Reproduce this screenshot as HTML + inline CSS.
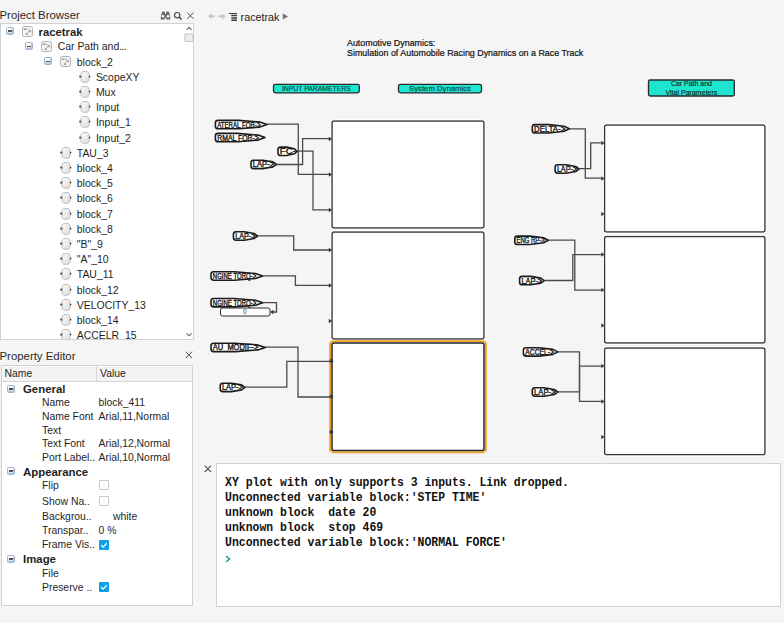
<!DOCTYPE html>
<html><head><meta charset="utf-8"><style>
html,body{margin:0;padding:0;}
body{width:784px;height:623px;overflow:hidden;position:relative;background:#f5f5f5;font-family:"Liberation Sans", sans-serif;color:#1e1e1e;}
.a{position:absolute;}
.hdr{position:absolute;font-size:11.4px;color:#2b2b2b;white-space:nowrap;line-height:14px;}
.box{position:absolute;background:#fff;border:1px solid #d2d2d2;box-sizing:border-box;overflow:hidden;}
.tt{position:absolute;font-size:10.45px;line-height:14px;white-space:nowrap;color:#1f1f1f;}
.b{font-weight:bold;}
.tt.b{font-size:11.3px;}
.pt{position:absolute;font-size:10.4px;line-height:14px;white-space:nowrap;color:#1f1f1f;}
.pt.b{font-size:11.4px;}
.ic{position:absolute;}
.xb{position:absolute;width:6px;height:6px;border:1px solid #9fb3cf;background:linear-gradient(#ffffff 30%,#c2d1e6);border-radius:1.5px;box-shadow:inset -1px -1px 0 #b5c6de;}
.xb:after{content:"";position:absolute;left:1px;top:2.4px;width:4px;height:1.3px;background:#5a5048;}
.cb{position:absolute;width:8px;height:8px;border:1px solid #c6c6c6;background:#fff;border-radius:1px;}
.cl{position:absolute;left:7.5px;font-family:"Liberation Mono",monospace;font-weight:bold;font-size:12.4px;line-height:14px;white-space:nowrap;color:#111;transform:scaleX(0.925);transform-origin:0 0;}
</style></head><body>
<svg width="0" height="0" style="position:absolute"><defs><linearGradient id="lg" x1="0" y1="0" x2="1" y2="1"><stop offset="0" stop-color="#fdfdfd"/><stop offset="1" stop-color="#dcdcdc"/></linearGradient></defs></svg>
<div class="hdr" style="left:-0.5px;top:7.5px">Project Browser</div>
<svg class="ic" style="left:160px;top:11px" width="36" height="10" viewBox="0 0 36 10">
 <path d="M1.9 1.2 Q2.2 0.6 3 0.6 L4 0.6 Q4.7 0.6 4.9 1.4 L5.1 3 L5.9 3 L6.1 1.4 Q6.3 0.6 7 0.6 L8 0.6 Q8.8 0.6 9.1 1.2 L10.2 5.5 L10.2 8.6 L6.4 8.6 L6.1 6.8 L4.9 6.8 L4.6 8.6 L0.8 8.6 L0.8 5.5Z" fill="#6a6a6a"/>
 <circle cx="3" cy="5.2" r="1.3" fill="#fff"/><circle cx="8" cy="5.2" r="1.3" fill="#fff"/>
 <circle cx="17.2" cy="4.2" r="2.7" fill="none" stroke="#505050" stroke-width="1.2"/><path d="M19.1 6.2 L21.6 8.5" stroke="#404040" stroke-width="1.6"/>
 <path d="M27.3 1.6 L33.5 7.9 M33.5 1.6 L27.3 7.9" stroke="#4a4a4a" stroke-width="1"/>
</svg>
<div class="box" style="left:0px;top:23px;width:194px;height:317px;">
<div class="xb" style="left:5.0px;top:3.0px"></div><svg class="ic" style="left:21.0px;top:2.0px" width="11" height="11" viewBox="0 0 11 11"><rect x="0.5" y="0.5" width="10" height="10" rx="1.8" fill="#f3f3f3" stroke="#b4b4b4"/><path d="M3 3.2h3.5l1.5 1.5M4.5 8l2.5-3" stroke="#a8a8a8" fill="none" stroke-width="0.8"/><rect x="1.8" y="2.3" width="2.4" height="1.8" rx="0.8" fill="#a0a0a0"/><rect x="6.6" y="4.2" width="2.6" height="2" rx="0.5" fill="#ababab"/><rect x="3.6" y="7.2" width="2.4" height="1.9" rx="0.5" fill="#a6a6a6"/></svg><div class="tt b" style="left:37.6px;top:1.1px">racetrak</div><div class="xb" style="left:24.1px;top:18.2px"></div><svg class="ic" style="left:40.1px;top:17.200000000000003px" width="11" height="11" viewBox="0 0 11 11"><rect x="0.5" y="0.5" width="10" height="10" rx="1.8" fill="#f3f3f3" stroke="#b4b4b4"/><path d="M3 3.2h3.5l1.5 1.5M4.5 8l2.5-3" stroke="#a8a8a8" fill="none" stroke-width="0.8"/><rect x="1.8" y="2.3" width="2.4" height="1.8" rx="0.8" fill="#a0a0a0"/><rect x="6.6" y="4.2" width="2.6" height="2" rx="0.5" fill="#ababab"/><rect x="3.6" y="7.2" width="2.4" height="1.9" rx="0.5" fill="#a6a6a6"/></svg><div class="tt" style="left:56.7px;top:16.3px">Car Path and<span style="letter-spacing:-0.6px">...</span></div><div class="xb" style="left:43.2px;top:33.4px"></div><svg class="ic" style="left:59.2px;top:32.4px" width="11" height="11" viewBox="0 0 11 11"><rect x="0.5" y="0.5" width="10" height="10" rx="1.8" fill="#f3f3f3" stroke="#b4b4b4"/><path d="M3 3.2h3.5l1.5 1.5M4.5 8l2.5-3" stroke="#a8a8a8" fill="none" stroke-width="0.8"/><rect x="1.8" y="2.3" width="2.4" height="1.8" rx="0.8" fill="#a0a0a0"/><rect x="6.6" y="4.2" width="2.6" height="2" rx="0.5" fill="#ababab"/><rect x="3.6" y="7.2" width="2.4" height="1.9" rx="0.5" fill="#a6a6a6"/></svg><div class="tt" style="left:75.8px;top:31.5px">block_2</div><svg class="ic" style="left:78.1px;top:46.8px" width="12" height="12" viewBox="0 0 12 12"><path d="M3.6 0.6h4.8l1.5 1.5v7.6l-1.5 1.5h-4.8l-1.5-1.5v-7.6z" fill="url(#lg)" stroke="#bdbdbd" stroke-width="1"/><path d="M0.3 4.6h1.9v2h-1.9z" fill="#4a4a4a"/><path d="M10 4.2 L11.7 5.6 L10 7z" fill="#3a3a3a"/></svg><div class="tt" style="left:94.9px;top:46.7px">ScopeXY</div><svg class="ic" style="left:78.1px;top:62.0px" width="12" height="12" viewBox="0 0 12 12"><path d="M3.6 0.6h4.8l1.5 1.5v7.6l-1.5 1.5h-4.8l-1.5-1.5v-7.6z" fill="url(#lg)" stroke="#bdbdbd" stroke-width="1"/><path d="M0.3 4.6h1.9v2h-1.9z" fill="#4a4a4a"/><path d="M10 4.2 L11.7 5.6 L10 7z" fill="#3a3a3a"/></svg><div class="tt" style="left:94.9px;top:61.9px">Mux</div><svg class="ic" style="left:78.1px;top:77.2px" width="12" height="12" viewBox="0 0 12 12"><path d="M3.6 0.6h4.8l1.5 1.5v7.6l-1.5 1.5h-4.8l-1.5-1.5v-7.6z" fill="url(#lg)" stroke="#bdbdbd" stroke-width="1"/><path d="M0.3 4.6h1.9v2h-1.9z" fill="#4a4a4a"/><path d="M10 4.2 L11.7 5.6 L10 7z" fill="#3a3a3a"/></svg><div class="tt" style="left:94.9px;top:77.1px">Input</div><svg class="ic" style="left:78.1px;top:92.4px" width="12" height="12" viewBox="0 0 12 12"><path d="M3.6 0.6h4.8l1.5 1.5v7.6l-1.5 1.5h-4.8l-1.5-1.5v-7.6z" fill="url(#lg)" stroke="#bdbdbd" stroke-width="1"/><path d="M0.3 4.6h1.9v2h-1.9z" fill="#4a4a4a"/><path d="M10 4.2 L11.7 5.6 L10 7z" fill="#3a3a3a"/></svg><div class="tt" style="left:94.9px;top:92.3px">Input_1</div><svg class="ic" style="left:78.1px;top:107.6px" width="12" height="12" viewBox="0 0 12 12"><path d="M3.6 0.6h4.8l1.5 1.5v7.6l-1.5 1.5h-4.8l-1.5-1.5v-7.6z" fill="url(#lg)" stroke="#bdbdbd" stroke-width="1"/><path d="M0.3 4.6h1.9v2h-1.9z" fill="#4a4a4a"/><path d="M10 4.2 L11.7 5.6 L10 7z" fill="#3a3a3a"/></svg><div class="tt" style="left:94.9px;top:107.5px">Input_2</div><svg class="ic" style="left:59.0px;top:122.8px" width="12" height="12" viewBox="0 0 12 12"><path d="M3.6 0.6h4.8l1.5 1.5v7.6l-1.5 1.5h-4.8l-1.5-1.5v-7.6z" fill="url(#lg)" stroke="#bdbdbd" stroke-width="1"/><path d="M0.3 4.6h1.9v2h-1.9z" fill="#4a4a4a"/><path d="M10 4.2 L11.7 5.6 L10 7z" fill="#3a3a3a"/></svg><div class="tt" style="left:75.8px;top:122.7px">TAU_3</div><svg class="ic" style="left:59.0px;top:138.0px" width="12" height="12" viewBox="0 0 12 12"><path d="M3.6 0.6h4.8l1.5 1.5v7.6l-1.5 1.5h-4.8l-1.5-1.5v-7.6z" fill="url(#lg)" stroke="#bdbdbd" stroke-width="1"/><path d="M0.3 4.6h1.9v2h-1.9z" fill="#4a4a4a"/><path d="M10 4.2 L11.7 5.6 L10 7z" fill="#3a3a3a"/></svg><div class="tt" style="left:75.8px;top:137.9px">block_4</div><svg class="ic" style="left:59.0px;top:153.2px" width="12" height="12" viewBox="0 0 12 12"><path d="M3.6 0.6h4.8l1.5 1.5v7.6l-1.5 1.5h-4.8l-1.5-1.5v-7.6z" fill="url(#lg)" stroke="#bdbdbd" stroke-width="1"/><path d="M0.3 4.6h1.9v2h-1.9z" fill="#4a4a4a"/><path d="M10 4.2 L11.7 5.6 L10 7z" fill="#3a3a3a"/></svg><div class="tt" style="left:75.8px;top:153.1px">block_5</div><svg class="ic" style="left:59.0px;top:168.4px" width="12" height="12" viewBox="0 0 12 12"><path d="M3.6 0.6h4.8l1.5 1.5v7.6l-1.5 1.5h-4.8l-1.5-1.5v-7.6z" fill="url(#lg)" stroke="#bdbdbd" stroke-width="1"/><path d="M0.3 4.6h1.9v2h-1.9z" fill="#4a4a4a"/><path d="M10 4.2 L11.7 5.6 L10 7z" fill="#3a3a3a"/></svg><div class="tt" style="left:75.8px;top:168.3px">block_6</div><svg class="ic" style="left:59.0px;top:183.6px" width="12" height="12" viewBox="0 0 12 12"><path d="M3.6 0.6h4.8l1.5 1.5v7.6l-1.5 1.5h-4.8l-1.5-1.5v-7.6z" fill="url(#lg)" stroke="#bdbdbd" stroke-width="1"/><path d="M0.3 4.6h1.9v2h-1.9z" fill="#4a4a4a"/><path d="M10 4.2 L11.7 5.6 L10 7z" fill="#3a3a3a"/></svg><div class="tt" style="left:75.8px;top:183.5px">block_7</div><svg class="ic" style="left:59.0px;top:198.8px" width="12" height="12" viewBox="0 0 12 12"><path d="M3.6 0.6h4.8l1.5 1.5v7.6l-1.5 1.5h-4.8l-1.5-1.5v-7.6z" fill="url(#lg)" stroke="#bdbdbd" stroke-width="1"/><path d="M0.3 4.6h1.9v2h-1.9z" fill="#4a4a4a"/><path d="M10 4.2 L11.7 5.6 L10 7z" fill="#3a3a3a"/></svg><div class="tt" style="left:75.8px;top:198.7px">block_8</div><svg class="ic" style="left:59.0px;top:214.0px" width="12" height="12" viewBox="0 0 12 12"><path d="M3.6 0.6h4.8l1.5 1.5v7.6l-1.5 1.5h-4.8l-1.5-1.5v-7.6z" fill="url(#lg)" stroke="#bdbdbd" stroke-width="1"/><path d="M0.3 4.6h1.9v2h-1.9z" fill="#4a4a4a"/><path d="M10 4.2 L11.7 5.6 L10 7z" fill="#3a3a3a"/></svg><div class="tt" style="left:75.8px;top:213.9px">"B"_9</div><svg class="ic" style="left:59.0px;top:229.2px" width="12" height="12" viewBox="0 0 12 12"><path d="M3.6 0.6h4.8l1.5 1.5v7.6l-1.5 1.5h-4.8l-1.5-1.5v-7.6z" fill="url(#lg)" stroke="#bdbdbd" stroke-width="1"/><path d="M0.3 4.6h1.9v2h-1.9z" fill="#4a4a4a"/><path d="M10 4.2 L11.7 5.6 L10 7z" fill="#3a3a3a"/></svg><div class="tt" style="left:75.8px;top:229.1px">"A"_10</div><svg class="ic" style="left:59.0px;top:244.4px" width="12" height="12" viewBox="0 0 12 12"><path d="M3.6 0.6h4.8l1.5 1.5v7.6l-1.5 1.5h-4.8l-1.5-1.5v-7.6z" fill="url(#lg)" stroke="#bdbdbd" stroke-width="1"/><path d="M0.3 4.6h1.9v2h-1.9z" fill="#4a4a4a"/><path d="M10 4.2 L11.7 5.6 L10 7z" fill="#3a3a3a"/></svg><div class="tt" style="left:75.8px;top:244.3px">TAU_11</div><svg class="ic" style="left:59.0px;top:259.6px" width="12" height="12" viewBox="0 0 12 12"><path d="M3.6 0.6h4.8l1.5 1.5v7.6l-1.5 1.5h-4.8l-1.5-1.5v-7.6z" fill="url(#lg)" stroke="#bdbdbd" stroke-width="1"/><path d="M0.3 4.6h1.9v2h-1.9z" fill="#4a4a4a"/><path d="M10 4.2 L11.7 5.6 L10 7z" fill="#3a3a3a"/></svg><div class="tt" style="left:75.8px;top:259.5px">block_12</div><svg class="ic" style="left:59.0px;top:274.8px" width="12" height="12" viewBox="0 0 12 12"><path d="M3.6 0.6h4.8l1.5 1.5v7.6l-1.5 1.5h-4.8l-1.5-1.5v-7.6z" fill="url(#lg)" stroke="#bdbdbd" stroke-width="1"/><path d="M0.3 4.6h1.9v2h-1.9z" fill="#4a4a4a"/><path d="M10 4.2 L11.7 5.6 L10 7z" fill="#3a3a3a"/></svg><div class="tt" style="left:75.8px;top:274.7px">VELOCITY_13</div><svg class="ic" style="left:59.0px;top:290.0px" width="12" height="12" viewBox="0 0 12 12"><path d="M3.6 0.6h4.8l1.5 1.5v7.6l-1.5 1.5h-4.8l-1.5-1.5v-7.6z" fill="url(#lg)" stroke="#bdbdbd" stroke-width="1"/><path d="M0.3 4.6h1.9v2h-1.9z" fill="#4a4a4a"/><path d="M10 4.2 L11.7 5.6 L10 7z" fill="#3a3a3a"/></svg><div class="tt" style="left:75.8px;top:289.9px">block_14</div><svg class="ic" style="left:59.0px;top:305.2px" width="12" height="12" viewBox="0 0 12 12"><path d="M3.6 0.6h4.8l1.5 1.5v7.6l-1.5 1.5h-4.8l-1.5-1.5v-7.6z" fill="url(#lg)" stroke="#bdbdbd" stroke-width="1"/><path d="M0.3 4.6h1.9v2h-1.9z" fill="#4a4a4a"/><path d="M10 4.2 L11.7 5.6 L10 7z" fill="#3a3a3a"/></svg><div class="tt" style="left:75.8px;top:305.1px">ACCELR_15</div>
</div>
<svg class="ic" style="left:183px;top:24px" width="11" height="20" viewBox="0 0 11 20"><path d="M3.6 5.8 L6.1 3.3 L8.6 5.8" fill="none" stroke="#606060" stroke-width="1.1"/><rect x="1.8" y="10" width="8.2" height="7.5" rx="1.2" fill="#ececec" stroke="#c2c2c2"/></svg>
<svg class="ic" style="left:183px;top:331px" width="11" height="7" viewBox="0 0 11 7"><path d="M3.6 2.3 L6.1 4.8 L8.6 2.3" fill="none" stroke="#606060" stroke-width="1.1"/></svg>
<div class="hdr" style="left:-0.5px;top:349px">Property Editor</div>
<svg class="ic" style="left:185px;top:351px" width="8" height="8" viewBox="0 0 8 8"><path d="M0.7 0.7 L7 7 M7 0.7 L0.7 7" stroke="#4a4a4a" stroke-width="1"/></svg>
<div class="box" style="left:1px;top:365px;width:192px;height:241px;">
<div class="a" style="left:0;top:0;width:190px;height:14.6px;background:#f3f3f3;border-bottom:1px solid #d6d6d6;box-shadow:inset 1px 1px 0 #fbfbfb;"></div>
<div class="a" style="left:94px;top:0;width:1px;height:15px;background:#d9d9d9;"></div>
<div class="pt" style="left:2.5px;top:1.2px">Name</div>
<div class="pt" style="left:98px;top:1.2px">Value</div>
<div class="xb" style="left:4.5px;top:18.9px"></div><div class="pt b" style="left:21px;top:16.3px">General</div><div class="pt" style="left:40px;top:30.4px">Name</div><div class="pt" style="left:96.5px;top:30.4px">block_411</div><div class="pt" style="left:40px;top:43.8px">Name Font</div><div class="pt" style="left:96.5px;top:43.8px">Arial,11,Normal</div><div class="pt" style="left:40px;top:57.7px">Text</div><div class="pt" style="left:96.5px;top:57.7px"></div><div class="pt" style="left:40px;top:71.1px">Text Font</div><div class="pt" style="left:96.5px;top:71.1px">Arial,12,Normal</div><div class="pt" style="left:40px;top:84.5px">Port Label..</div><div class="pt" style="left:96.5px;top:84.5px">Arial,10,Normal</div><div class="xb" style="left:4.5px;top:101.1px"></div><div class="pt b" style="left:21px;top:98.5px">Appearance</div><div class="pt" style="left:40px;top:113.2px">Flip</div><div class="cb" style="left:97px;top:114.3px"></div><div class="pt" style="left:40px;top:128.5px">Show Na..</div><div class="cb" style="left:97px;top:129.6px"></div><div class="pt" style="left:40px;top:143.8px">Backgrou..</div><div class="pt" style="left:96.5px;top:143.8px"><span style="margin-left:14.5px">white</span></div><div class="pt" style="left:40px;top:157.9px">Transpar..</div><div class="pt" style="left:96.5px;top:157.9px">0 %</div><div class="pt" style="left:40px;top:172.4px">Frame Vis..</div><svg class="ic" style="left:97px;top:173.5px" width="10" height="10" viewBox="0 0 10 10"><rect width="10" height="10" rx="1" fill="#0ea1e8"/><path d="M2.3 5.2l1.9 1.9 3.6-4" stroke="#fff" stroke-width="1.3" fill="none"/></svg><div class="xb" style="left:4.5px;top:189.0px"></div><div class="pt b" style="left:21px;top:186.4px">Image</div><div class="pt" style="left:40px;top:200.5px">File</div><div class="pt" style="left:96.5px;top:200.5px"></div><div class="pt" style="left:40px;top:214.8px">Preserve ..</div><svg class="ic" style="left:97px;top:215.9px" width="10" height="10" viewBox="0 0 10 10"><rect width="10" height="10" rx="1" fill="#0ea1e8"/><path d="M2.3 5.2l1.9 1.9 3.6-4" stroke="#fff" stroke-width="1.3" fill="none"/></svg>
</div>
<svg class="ic" style="left:207px;top:11px" width="84" height="12" viewBox="0 0 84 12">
 <path d="M1 5.3 L4.6 2.2 L4.6 4.3 L8 4.3 L8 6.3 L4.6 6.3 L4.6 8.4Z" fill="#c6c6c6"/>
 <path d="M19 5.3 L15.2 2.2 L15.2 4.3 L11.2 4.3 L11.2 6.3 L15.2 6.3 L15.2 8.4Z" fill="#c6c6c6"/>
 <path d="M22 2.5 h8 M24.3 4.4 h5.7 M24.3 6.2 h5.7 M24.3 7.8 h5.7 M24.3 9.4 h5.7" stroke="#3c3c3c" stroke-width="1.1"/>
 <path d="M75.8 2.4 L81 5.4 L75.8 8.4Z" fill="#707070"/>
</svg>
<div class="a" style="left:240.6px;top:9.7px;font-size:10.75px;line-height:14px;color:#222;">racetrak</div>
<div class="a" style="left:347px;top:37.5px;font-size:8.9px;line-height:10.6px;color:#111;-webkit-text-stroke:0.2px #111;white-space:nowrap;">Automotive Dynamics:<br>Simulation of Automobile Racing Dynamics on a Race Track</div>
<svg style="position:absolute;left:0;top:0" width="784" height="623" viewBox="0 0 784 623"><rect x="332" y="121" width="152" height="107" rx="2" fill="#fff" stroke="#383838" stroke-width="1.5"/><rect x="330.7" y="119.7" width="154.6" height="109.6" rx="3" fill="none" stroke="#fff" stroke-width="1"/><path d="M328.8 136.8 L332 139 L328.8 141.2Z" fill="#333"/><path d="M328.8 172.3 L332 174.5 L328.8 176.7Z" fill="#333"/><path d="M328.8 207.8 L332 210 L328.8 212.2Z" fill="#333"/><rect x="332" y="232" width="152" height="107" rx="2" fill="#fff" stroke="#383838" stroke-width="1.5"/><rect x="330.7" y="230.7" width="154.6" height="109.6" rx="3" fill="none" stroke="#fff" stroke-width="1"/><path d="M328.8 247.8 L332 250 L328.8 252.2Z" fill="#333"/><path d="M328.8 283.3 L332 285.5 L328.8 287.7Z" fill="#333"/><path d="M328.8 318.8 L332 321 L328.8 323.2Z" fill="#333"/><rect x="604.5" y="125" width="160.5" height="107" rx="2" fill="#fff" stroke="#383838" stroke-width="1.5"/><rect x="603.2" y="123.7" width="163.1" height="109.6" rx="3" fill="none" stroke="#fff" stroke-width="1"/><path d="M601.3 140.8 L604.5 143 L601.3 145.2Z" fill="#333"/><path d="M601.3 176.3 L604.5 178.5 L601.3 180.7Z" fill="#333"/><path d="M601.3 211.8 L604.5 214 L601.3 216.2Z" fill="#333"/><rect x="604.5" y="236.5" width="160.5" height="106.5" rx="2" fill="#fff" stroke="#383838" stroke-width="1.5"/><rect x="603.2" y="235.2" width="163.1" height="109.1" rx="3" fill="none" stroke="#fff" stroke-width="1"/><path d="M601.3 252.3 L604.5 254.5 L601.3 256.7Z" fill="#333"/><path d="M601.3 287.8 L604.5 290.0 L601.3 292.2Z" fill="#333"/><path d="M601.3 323.3 L604.5 325.5 L601.3 327.7Z" fill="#333"/><rect x="604.5" y="348" width="160.5" height="106.69999999999999" rx="2" fill="#fff" stroke="#383838" stroke-width="1.5"/><rect x="603.2" y="346.7" width="163.1" height="109.29999999999998" rx="3" fill="none" stroke="#fff" stroke-width="1"/><path d="M601.3 363.8 L604.5 366 L601.3 368.2Z" fill="#333"/><path d="M601.3 399.3 L604.5 401.5 L601.3 403.7Z" fill="#333"/><path d="M601.3 434.8 L604.5 437 L601.3 439.2Z" fill="#333"/><rect x="330.1" y="341.1" width="155.8" height="111.3" rx="3.5" fill="none" stroke="#f3a124" stroke-width="1.9"/><rect x="332" y="343" width="152" height="107.5" rx="2" fill="#fff" stroke="#262626" stroke-width="1.5"/><circle cx="331.4" cy="361" r="1.9" fill="#3a3a3a"/><circle cx="331.4" cy="396.5" r="1.9" fill="#3a3a3a"/><circle cx="331.4" cy="432" r="1.9" fill="#3a3a3a"/><path d="M267 124.2 L298.3 124.2 L298.3 174.4 L329 174.4" fill="none" stroke="#4a4a4a" stroke-width="1.3"/><path d="M297 151.2 L313 151.2 L313 209.8 L329 209.8" fill="none" stroke="#4a4a4a" stroke-width="1.3"/><path d="M276.5 164.5 L302.6 164.5 L302.6 138.6 L329 138.6" fill="none" stroke="#4a4a4a" stroke-width="1.3"/><path d="M218.00 120.40 L238.62 120.40 L259.78 122.10 L267.00 124.60 L259.78 127.10 L238.62 128.80 L218.00 128.80 Q215.40 128.80 215.40 126.20 L215.40 123.00 Q215.40 120.40 218.00 120.40Z" fill="#fff" stroke="#1c1c1c" stroke-width="1.6" stroke-linejoin="round"/><text x="217.20" y="127.60" font-family="Liberation Sans" font-size="8.3" fill="#1a1a1a" stroke="#1a1a1a" stroke-width="0.4" textLength="43.3" lengthAdjust="spacingAndGlyphs">ATERAL FOR-&gt;</text><path d="M218.00 133.40 L237.72 133.40 L258.06 135.10 L265.00 137.60 L258.06 140.10 L237.72 141.80 L218.00 141.80 Q215.40 141.80 215.40 139.20 L215.40 136.00 Q215.40 133.40 218.00 133.40Z" fill="#fff" stroke="#1c1c1c" stroke-width="1.6" stroke-linejoin="round"/><text x="217.20" y="140.60" font-family="Liberation Sans" font-size="8.3" fill="#1a1a1a" stroke="#1a1a1a" stroke-width="0.4" textLength="41.7" lengthAdjust="spacingAndGlyphs">RMAL FOR-&gt;</text><path d="M280.60 147.10 L286.55 147.10 L294.34 148.80 L297.00 151.30 L294.34 153.80 L286.55 155.50 L280.60 155.50 Q278.00 155.50 278.00 152.90 L278.00 149.70 Q278.00 147.10 280.60 147.10Z" fill="#fff" stroke="#1c1c1c" stroke-width="1.6" stroke-linejoin="round"/><text x="279.80" y="154.30" font-family="Liberation Sans" font-size="8.3" fill="#1a1a1a" stroke="#1a1a1a" stroke-width="0.4" textLength="16.0" lengthAdjust="spacingAndGlyphs">FC-</text><path d="M253.60 160.20 L262.48 160.20 L272.93 161.90 L276.50 164.40 L272.93 166.90 L262.48 168.60 L253.60 168.60 Q251.00 168.60 251.00 166.00 L251.00 162.80 Q251.00 160.20 253.60 160.20Z" fill="#fff" stroke="#1c1c1c" stroke-width="1.6" stroke-linejoin="round"/><text x="252.80" y="167.40" font-family="Liberation Sans" font-size="8.3" fill="#1a1a1a" stroke="#1a1a1a" stroke-width="0.4" textLength="21.4" lengthAdjust="spacingAndGlyphs">LAP-&gt;</text><path d="M257.5 235.8 L293.7 235.8 L293.7 250 L329 250" fill="none" stroke="#4a4a4a" stroke-width="1.3"/><path d="M262.7 275.9 L295.4 275.9 L295.4 285.4 L329 285.4" fill="none" stroke="#4a4a4a" stroke-width="1.3"/><path d="M262.7 302.6 L276.5 302.6 L276.5 312 L272 312" fill="none" stroke="#4a4a4a" stroke-width="1.3"/><path d="M270.2 312 L273.4 309.8 L273.4 314.2Z" fill="#333"/><path d="M236.00 231.80 L244.25 231.80 L254.13 233.50 L257.50 236.00 L254.13 238.50 L244.25 240.20 L236.00 240.20 Q233.40 240.20 233.40 237.60 L233.40 234.40 Q233.40 231.80 236.00 231.80Z" fill="#fff" stroke="#1c1c1c" stroke-width="1.6" stroke-linejoin="round"/><text x="235.20" y="239.00" font-family="Liberation Sans" font-size="8.3" fill="#1a1a1a" stroke="#1a1a1a" stroke-width="0.4" textLength="20.2" lengthAdjust="spacingAndGlyphs">LAP-&gt;</text><path d="M213.60 271.80 L234.26 271.80 L255.46 273.50 L262.70 276.00 L255.46 278.50 L234.26 280.20 L213.60 280.20 Q211.00 280.20 211.00 277.60 L211.00 274.40 Q211.00 271.80 213.60 271.80Z" fill="#fff" stroke="#1c1c1c" stroke-width="1.6" stroke-linejoin="round"/><text x="212.80" y="279.00" font-family="Liberation Sans" font-size="8.3" fill="#1a1a1a" stroke="#1a1a1a" stroke-width="0.4" textLength="43.4" lengthAdjust="spacingAndGlyphs">NGINE TORQ-&gt;</text><path d="M213.60 298.50 L234.26 298.50 L255.46 300.20 L262.70 302.70 L255.46 305.20 L234.26 306.90 L213.60 306.90 Q211.00 306.90 211.00 304.30 L211.00 301.10 Q211.00 298.50 213.60 298.50Z" fill="#fff" stroke="#1c1c1c" stroke-width="1.6" stroke-linejoin="round"/><text x="212.80" y="305.70" font-family="Liberation Sans" font-size="8.3" fill="#1a1a1a" stroke="#1a1a1a" stroke-width="0.4" textLength="43.4" lengthAdjust="spacingAndGlyphs">NGINE TORQ-&gt;</text><rect x="220.5" y="308" width="49.5" height="8" rx="2" fill="#fff" stroke="#2a2a2a" stroke-width="1"/><text x="244.8" y="314.2" font-family="Liberation Sans" font-size="6.6" fill="#444" text-anchor="middle">0</text><path d="M265.3 347.2 L298 347.2 L298 397 L331 397" fill="none" stroke="#4a4a4a" stroke-width="1.3"/><path d="M245 387.2 L286.8 387.2 L286.8 361.3 L331 361.3" fill="none" stroke="#4a4a4a" stroke-width="1.3"/><path d="M213.60 343.20 L235.44 343.20 L257.70 344.90 L265.30 347.40 L257.70 349.90 L235.44 351.60 L213.60 351.60 Q211.00 351.60 211.00 349.00 L211.00 345.80 Q211.00 343.20 213.60 343.20Z" fill="#fff" stroke="#1c1c1c" stroke-width="1.6" stroke-linejoin="round"/><text x="212.80" y="350.40" font-family="Liberation Sans" font-size="8.3" fill="#1a1a1a" stroke="#1a1a1a" stroke-width="0.4" textLength="45.6" lengthAdjust="spacingAndGlyphs">AU_MODIF-&gt;</text><path d="M222.80 383.20 L231.36 383.20 L241.53 384.90 L245.00 387.40 L241.53 389.90 L231.36 391.60 L222.80 391.60 Q220.20 391.60 220.20 389.00 L220.20 385.80 Q220.20 383.20 222.80 383.20Z" fill="#fff" stroke="#1c1c1c" stroke-width="1.6" stroke-linejoin="round"/><text x="222.00" y="390.40" font-family="Liberation Sans" font-size="8.3" fill="#1a1a1a" stroke="#1a1a1a" stroke-width="0.4" textLength="20.8" lengthAdjust="spacingAndGlyphs">LAP-&gt;</text><path d="M569.2 128.8 L585.3 128.8 L585.3 178.2 L601.5 178.2" fill="none" stroke="#4a4a4a" stroke-width="1.3"/><path d="M579 168.6 L590.7 168.6 L590.7 142.8 L601.5 142.8" fill="none" stroke="#4a4a4a" stroke-width="1.3"/><path d="M534.90 124.60 L548.95 124.60 L564.12 126.30 L569.30 128.80 L564.12 131.30 L548.95 133.00 L534.90 133.00 Q532.30 133.00 532.30 130.40 L532.30 127.20 Q532.30 124.60 534.90 124.60Z" fill="#fff" stroke="#1c1c1c" stroke-width="1.6" stroke-linejoin="round"/><text x="534.10" y="131.80" font-family="Liberation Sans" font-size="8.3" fill="#1a1a1a" stroke="#1a1a1a" stroke-width="0.4" textLength="31.1" lengthAdjust="spacingAndGlyphs">DELTA-&gt;</text><path d="M557.70 164.80 L565.86 164.80 L575.65 166.50 L579.00 169.00 L575.65 171.50 L565.86 173.20 L557.70 173.20 Q555.10 173.20 555.10 170.60 L555.10 167.40 Q555.10 164.80 557.70 164.80Z" fill="#fff" stroke="#1c1c1c" stroke-width="1.6" stroke-linejoin="round"/><text x="556.90" y="172.00" font-family="Liberation Sans" font-size="8.3" fill="#1a1a1a" stroke="#1a1a1a" stroke-width="0.4" textLength="20.1" lengthAdjust="spacingAndGlyphs">LAP-&gt;</text><path d="M548.3 240.2 L574.8 240.2 L574.8 290.2 L601.5 290.2" fill="none" stroke="#4a4a4a" stroke-width="1.3"/><path d="M544.2 280.5 L572.8 280.5 L572.8 254.6 L601.5 254.6" fill="none" stroke="#4a4a4a" stroke-width="1.3"/><path d="M517.40 236.10 L529.88 236.10 L543.61 237.80 L548.30 240.30 L543.61 242.80 L529.88 244.50 L517.40 244.50 Q514.80 244.50 514.80 241.90 L514.80 238.70 Q514.80 236.10 517.40 236.10Z" fill="#fff" stroke="#1c1c1c" stroke-width="1.6" stroke-linejoin="round"/><text x="516.60" y="243.30" font-family="Liberation Sans" font-size="8.3" fill="#1a1a1a" stroke="#1a1a1a" stroke-width="0.4" textLength="28.1" lengthAdjust="spacingAndGlyphs">ENG RP-&gt;</text><path d="M522.20 276.40 L530.67 276.40 L540.76 278.10 L544.20 280.60 L540.76 283.10 L530.67 284.80 L522.20 284.80 Q519.60 284.80 519.60 282.20 L519.60 279.00 Q519.60 276.40 522.20 276.40Z" fill="#fff" stroke="#1c1c1c" stroke-width="1.6" stroke-linejoin="round"/><text x="521.40" y="283.60" font-family="Liberation Sans" font-size="8.3" fill="#1a1a1a" stroke="#1a1a1a" stroke-width="0.4" textLength="20.7" lengthAdjust="spacingAndGlyphs">LAP-&gt;</text><path d="M557.8 351.8 L579.5 351.8 L579.5 401.3 L601.5 401.3" fill="none" stroke="#4a4a4a" stroke-width="1.3"/><path d="M557.8 391.8 L579.5 391.8 L579.5 366.1 L601.5 366.1" fill="none" stroke="#4a4a4a" stroke-width="1.3"/><path d="M526.00 347.70 L538.88 347.70 L552.98 349.40 L557.80 351.90 L552.98 354.40 L538.88 356.10 L526.00 356.10 Q523.40 356.10 523.40 353.50 L523.40 350.30 Q523.40 347.70 526.00 347.70Z" fill="#fff" stroke="#1c1c1c" stroke-width="1.6" stroke-linejoin="round"/><text x="525.20" y="354.90" font-family="Liberation Sans" font-size="8.3" fill="#1a1a1a" stroke="#1a1a1a" stroke-width="0.4" textLength="28.9" lengthAdjust="spacingAndGlyphs">ACCEL-&gt;</text><path d="M534.90 387.80 L543.77 387.80 L554.23 389.50 L557.80 392.00 L554.23 394.50 L543.77 396.20 L534.90 396.20 Q532.30 396.20 532.30 393.60 L532.30 390.40 Q532.30 387.80 534.90 387.80Z" fill="#fff" stroke="#1c1c1c" stroke-width="1.6" stroke-linejoin="round"/><text x="534.10" y="395.00" font-family="Liberation Sans" font-size="8.3" fill="#1a1a1a" stroke="#1a1a1a" stroke-width="0.4" textLength="21.4" lengthAdjust="spacingAndGlyphs">LAP-&gt;</text><rect x="273.5" y="84.3" width="85.80000000000001" height="8.600000000000009" rx="1.8" fill="#1ee6d2" stroke="#2a2a2a" stroke-width="1.3"/><text x="316.4" y="91.3" font-family="Liberation Sans" font-size="7.2" fill="#083a35" stroke="#083a35" stroke-width="0.12" text-anchor="middle" textLength="69" lengthAdjust="spacingAndGlyphs">INPUT PARAMETERS</text><rect x="398.5" y="84.3" width="83.0" height="8.600000000000009" rx="1.8" fill="#1ee6d2" stroke="#2a2a2a" stroke-width="1.3"/><text x="440.0" y="91.3" font-family="Liberation Sans" font-size="7.2" fill="#083a35" stroke="#083a35" stroke-width="0.12" text-anchor="middle" textLength="62" lengthAdjust="spacingAndGlyphs">System Dynamics</text><rect x="648.5" y="80" width="85.8" height="16" rx="1.8" fill="#1ee4d0" stroke="#2a2a2a" stroke-width="1.3"/><text x="691.4" y="86" font-family="Liberation Sans" font-size="6.8" fill="#0a1f1c" stroke="#0a1f1c" stroke-width="0.1" text-anchor="middle" textLength="41" lengthAdjust="spacingAndGlyphs">Car Path and</text><text x="691.4" y="95" font-family="Liberation Sans" font-size="6.8" fill="#0a1f1c" stroke="#0a1f1c" stroke-width="0.1" text-anchor="middle" textLength="52" lengthAdjust="spacingAndGlyphs">Vital Parameters</text></svg>
<svg class="ic" style="left:204px;top:465px" width="8" height="8" viewBox="0 0 8 8"><path d="M0.7 0.7 L7 7 M7 0.7 L0.7 7" stroke="#555" stroke-width="1.1"/></svg>
<div class="box" style="left:216px;top:463px;width:565px;height:144px;">
<div class="cl" style="top:11.5px">XY&nbsp;plot&nbsp;with&nbsp;only&nbsp;supports&nbsp;3&nbsp;inputs.&nbsp;Link&nbsp;dropped.</div><div class="cl" style="top:26.7px">Unconnected&nbsp;variable&nbsp;block:'STEP&nbsp;TIME'</div><div class="cl" style="top:41.9px">unknown&nbsp;block&nbsp;&nbsp;date&nbsp;20</div><div class="cl" style="top:57.1px">unknown&nbsp;block&nbsp;&nbsp;stop&nbsp;469</div><div class="cl" style="top:72.3px">Unconnected&nbsp;variable&nbsp;block:'NORMAL&nbsp;FORCE'</div>
<svg class="ic" style="left:8.4px;top:90.5px" width="6" height="8" viewBox="0 0 6 8"><path d="M1 1 L4.5 4 L1 7" fill="none" stroke="#1f9e96" stroke-width="1.6"/></svg>
</div>
</body></html>
